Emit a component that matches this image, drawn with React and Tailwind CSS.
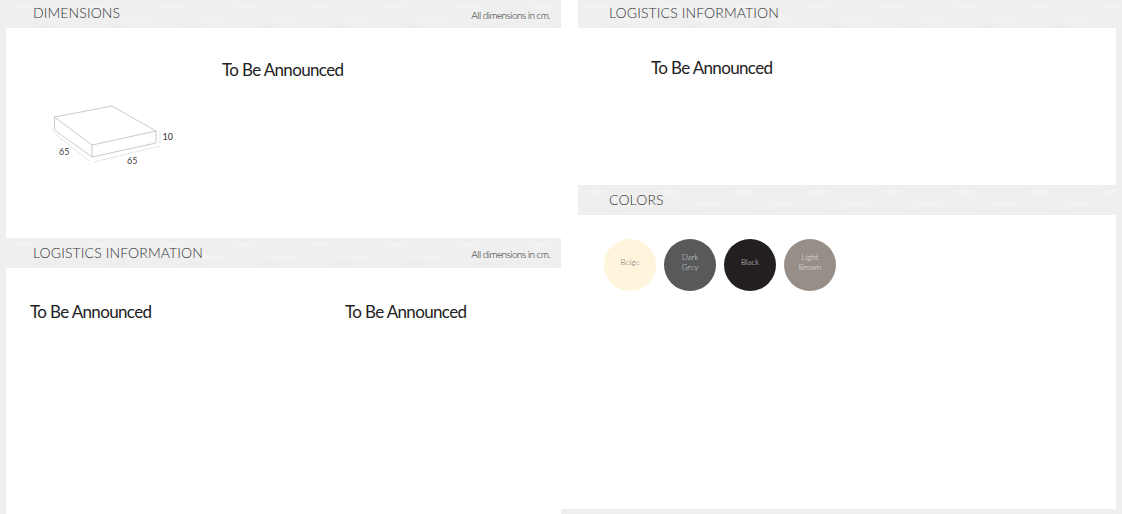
const lato = "font-['Lato','Liberation_Sans',sans-serif]";
const announced = "text-[17px] leading-5 tracking-[-0.65px] text-[#222]";

function BoxDrawing() {
  return (
    <svg width="130" height="70" viewBox="0 0 130 70" className="block" fill="none">
      <g stroke="#a6a6a6" strokeWidth="0.6">
        <path d="M4.5 13 L62 2 L106 27 L42 41 Z" />
        <path d="M4.5 13 V26 L42 53 L106 39 V27" />
        <path d="M42 41 V53" />
      </g>
      <g stroke="#d4d4d4" strokeWidth="0.6">
        <path d="M1 26 L39 57" />
        <path d="M44 58 L110 42" />
        <path d="M110 27 V39" />
      </g>
      <g fill="#444" fontSize="9" fontFamily="Lato, sans-serif">
        <text x="9" y="51">65</text>
        <text x="77" y="60">65</text>
        <text x="112.5" y="36" fontWeight="500">10</text>
      </g>
    </svg>
  );
}

// paper-like band behind each section title
function SectionHeader({ title, note, className = "", titleClass = "" }) {
  return (
    <div
      className={`flex items-center justify-between bg-[#efefef] bg-[radial-gradient(ellipse_16px_3px_at_18px_7px,#f4f4f4,transparent),radial-gradient(ellipse_22px_3px_at_56px_19px,#f3f3f3,transparent),radial-gradient(ellipse_14px_3px_at_38px_26px,#ebebeb,transparent)] bg-[length:74px_30px] ${className}`}
    >
      <span className={`text-[14px] leading-none font-light tracking-[0.12px] text-[#333] ${titleClass}`}>{title}</span>
      {note && <span className="mt-[1px] text-[10px] leading-none font-light tracking-[-0.55px] text-[#222]">{note}</span>}
    </div>
  );
}

function Swatch({ bg, text, lines }) {
  return (
    <div className={`flex h-[52px] w-[52px] flex-col items-center justify-center rounded-full pb-[6px] text-[8px] leading-[10px] font-light ${bg} ${text}`}>
      {lines.map((line) => (
        <span key={line}>{line}</span>
      ))}
    </div>
  );
}

export default function App() {
  return (
    <div className={`flex h-[514px] w-[1122px] overflow-hidden bg-[#efefef] pl-[6px] ${lato}`}>
      <div className="flex w-[555px] flex-col bg-white">
        <SectionHeader title="DIMENSIONS" note="All dimensions in cm." titleClass="-mt-[2px]" className="h-[28px] pr-[11px] pl-[27px]" />
        <div className="h-[210px] pt-[32px]">
          <p className={`pl-[216px] ${announced}`}>To Be Announced</p>
          <div className="mt-[24px] ml-[44px]">
            <BoxDrawing />
          </div>
        </div>
        <SectionHeader title="LOGISTICS INFORMATION" note="All dimensions in cm." className="h-[30px] pr-[11px] pl-[27px]" />
        <div className="flex pt-[34px] pl-[24px]">
          <p className={`w-[315px] ${announced}`}>To Be Announced</p>
          <p className={announced}>To Be Announced</p>
        </div>
      </div>
      <div className="h-[509px] w-[555px] bg-white pl-[17px]">
        <SectionHeader title="LOGISTICS INFORMATION" titleClass="-mt-[2px]" className="h-[28px] pl-[31px]" />
        <div className="h-[157px] pt-[30px] pl-[73px]">
          <p className={announced}>To Be Announced</p>
        </div>
        <SectionHeader title="COLORS" className="h-[30px] pl-[31px]" />
        <div className="flex gap-[8px] pt-[24px] pl-[26px]">
          <Swatch bg="bg-[#fef5dc]" text="text-[#666]" lines={["Beige"]} />
          <Swatch bg="bg-[#58595b]" text="text-[#ddd]" lines={["Dark", "Grey"]} />
          <Swatch bg="bg-[#231f20]" text="text-[#ddd]" lines={["Black"]} />
          <Swatch bg="bg-[#968e87]" text="text-[#e8e8e8]" lines={["Light", "Brown"]} />
        </div>
      </div>
    </div>
  );
}
